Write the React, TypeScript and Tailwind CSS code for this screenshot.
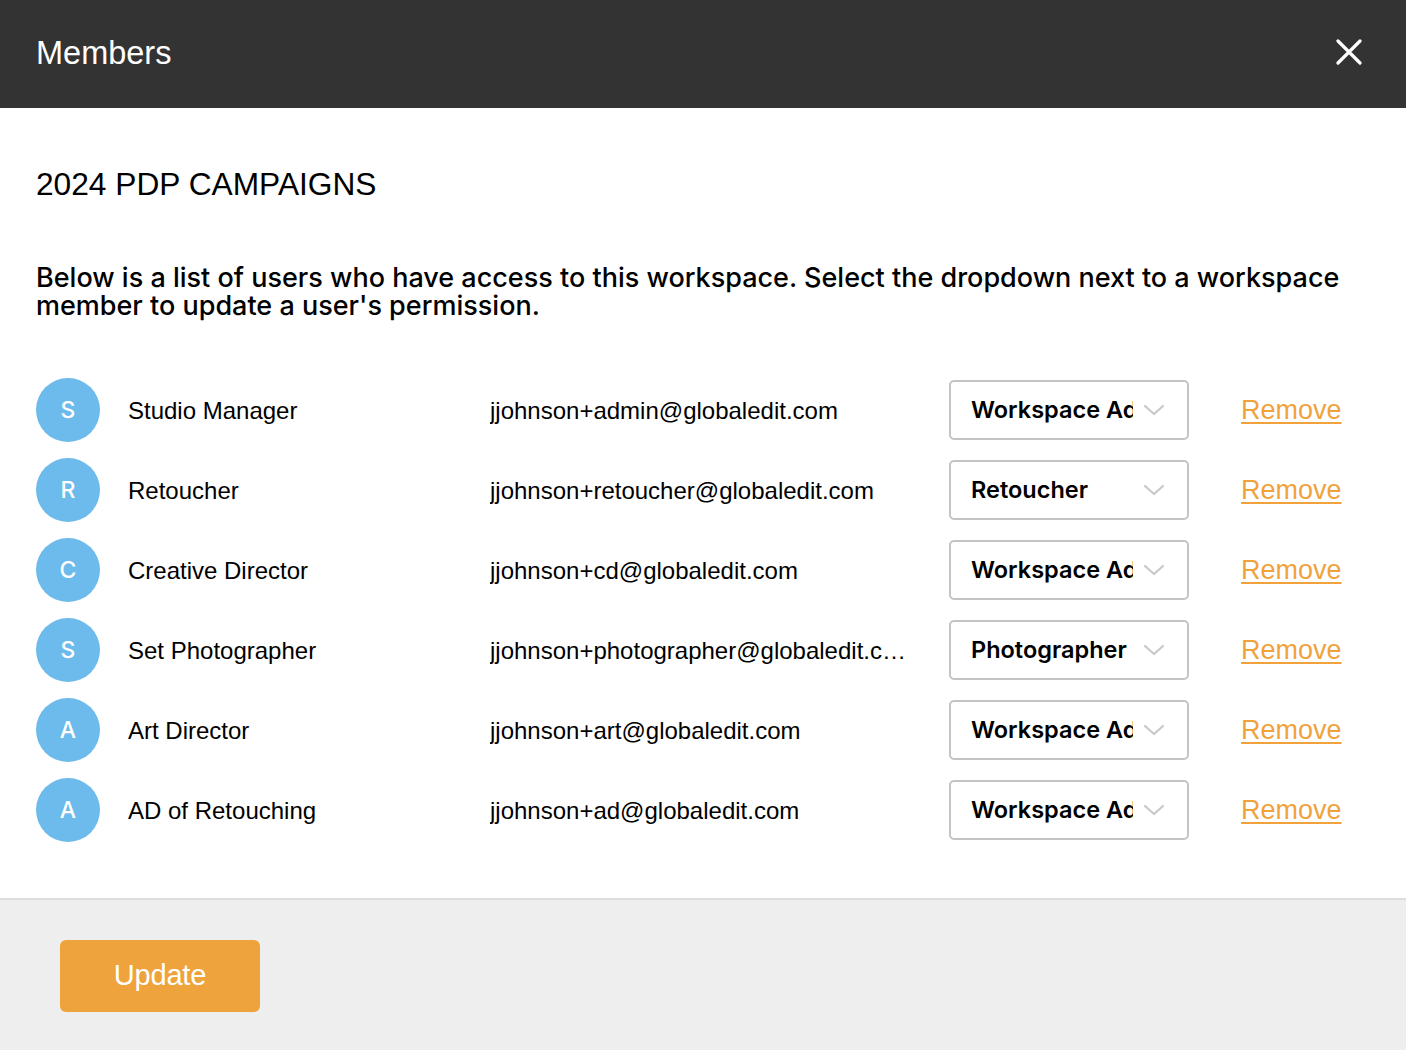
import React from 'react';

const members = [
    { initial: 'S', name: 'Studio Manager', email: 'jjohnson+admin@globaledit.com', role: 'Workspace Admin' },
    { initial: 'R', name: 'Retoucher', email: 'jjohnson+retoucher@globaledit.com', role: 'Retoucher' },
    { initial: 'C', name: 'Creative Director', email: 'jjohnson+cd@globaledit.com', role: 'Workspace Admin' },
    { initial: 'S', name: 'Set Photographer', email: 'jjohnson+photographer@globaledit.com', role: 'Photographer' },
    { initial: 'A', name: 'Art Director', email: 'jjohnson+art@globaledit.com', role: 'Workspace Admin' },
    { initial: 'A', name: 'AD of Retouching', email: 'jjohnson+ad@globaledit.com', role: 'Workspace Admin' },
];

export default function App() {
    return (
        <div className="w-[1406px] h-[1050px] flex flex-col bg-white text-black font-['Liberation_Sans',Arial,sans-serif]">
            {/* header */}
            <header className="h-[108px] bg-[#333333] flex items-center justify-between pl-9 pr-[44px] shrink-0">
                <h1 className="text-[32.5px] text-white pb-[2px]">Members</h1>
                <button className="text-white pb-[4px]">
                    <svg width="26" height="26" viewBox="0 0 26 26" fill="none" stroke="currentColor" strokeWidth="3.2" strokeLinecap="round">
                        <path d="M2 2 L24 24 M24 2 L2 24" />
                    </svg>
                </button>
            </header>

            <main className="flex-1 px-9 pt-[58px]">
                <h2 className="text-[31.7px] leading-[36px]">2024 PDP CAMPAIGNS</h2>
                <p className="mt-[62px] text-[27px] leading-[28px] font-medium font-['Inter',sans-serif]">
                    Below is a list of users who have access to this workspace. Select the dropdown next to a workspace member to update a user's permission.
                </p>

                <ul className="mt-[58px] flex flex-col gap-4">
                    {members.map((m, i) => (
                        <li key={i} className="flex items-center h-[64px]">
                            <div className="w-16 h-16 rounded-full bg-[#6cbbec] text-white flex items-center justify-center text-[23px] font-medium font-['Inter',sans-serif] shrink-0">
                                {m.initial}
                            </div>
                            <div className="w-[390px] pl-7 text-[24px] pt-[2px]">{m.name}</div>
                            <div className="w-[420px] text-[24px] truncate pt-[2px]">{m.email}</div>
                            <div className="ml-[39px] w-[240px] h-[60px] border-2 border-[#c4c4c4] rounded-[5px] flex items-center pl-[20px] pr-[22px] gap-[10px] overflow-hidden">
                                <span className="flex-1 overflow-hidden whitespace-nowrap text-[23.5px] font-semibold font-['Inter',sans-serif]">{m.role}</span>
                                <svg width="22" height="12" viewBox="0 0 22 12" fill="none" stroke="#c8c8c8" strokeWidth="2.2" strokeLinecap="round" strokeLinejoin="round" className="shrink-0">
                                    <path d="M2 2 L11 10 L20 2" />
                                </svg>
                            </div>
                            <a href="#" className="ml-[52px] text-[27px] text-[#f0a33c] underline underline-offset-[3px] decoration-[2px]">Remove</a>
                        </li>
                    ))}
                </ul>
            </main>

            {/* footer */}
            <footer className="h-[152px] shrink-0 bg-[#eeeeee] border-t-2 border-[#dedede] flex items-start pl-[60px] pt-[40px]">
                <button className="w-[200px] h-[72px] rounded-[6px] bg-[#efa33d] text-white text-[29px] tracking-[-0.2px]">Update</button>
            </footer>
        </div>
    );
}
